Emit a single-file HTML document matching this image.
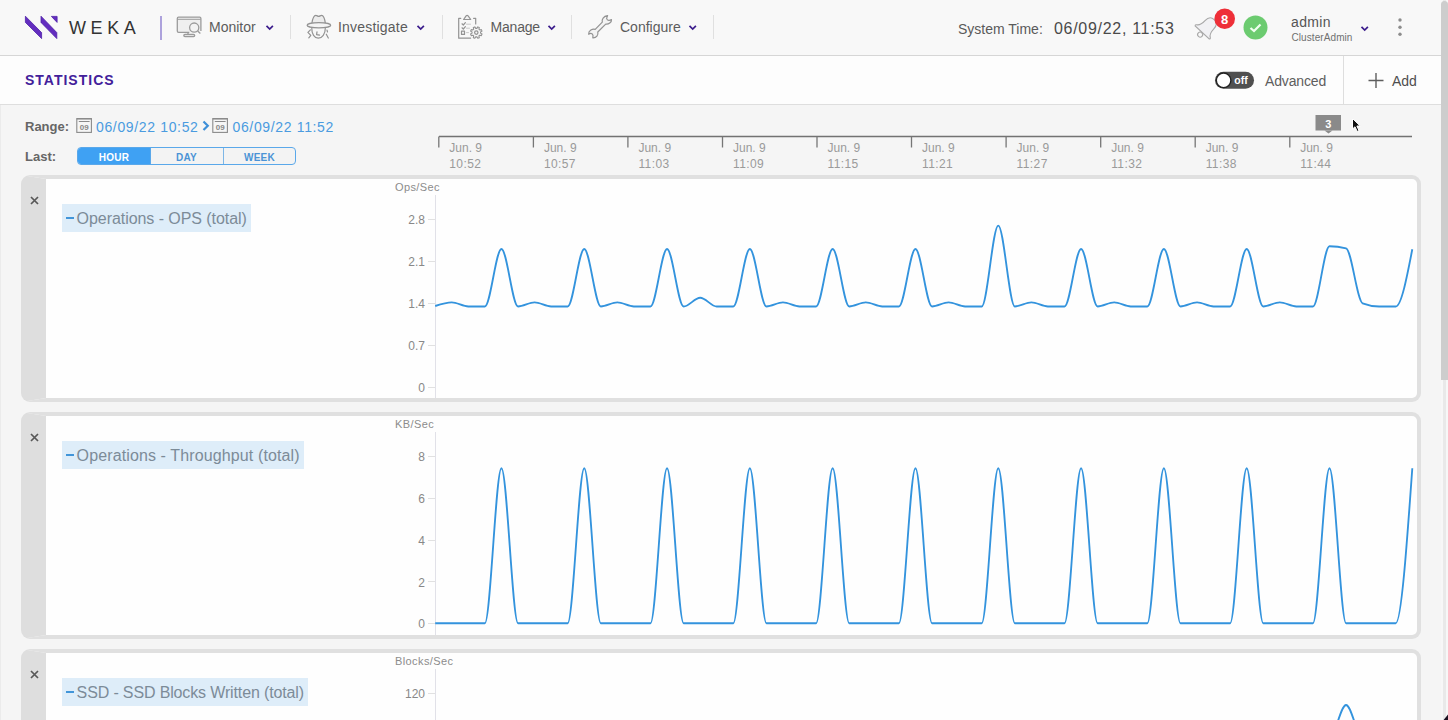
<!DOCTYPE html>
<html><head><meta charset="utf-8">
<style>
*{box-sizing:border-box;margin:0;padding:0}
html,body{width:1448px;height:720px;overflow:hidden}
body{position:relative;background:#f5f5f5;font-family:"Liberation Sans",sans-serif;color:#555}
.a{position:absolute;white-space:nowrap}
#hdr{position:absolute;left:0;top:0;width:1441px;height:56px;background:#f8f8f8;border-bottom:1px solid #d6d6d6}
#bar{position:absolute;left:0;top:56px;width:1441px;height:49px;background:#fdfdfd;border-bottom:1px solid #dedede}
.nav{font-size:14px;color:#5c5c5c}
.sep{position:absolute;width:1px;background:#e0e0e0}
.card{position:absolute;left:21px;width:1400px;border:4px solid #e0e0e0;border-left:25px solid #dedede;border-radius:9px;background:#fefefe}
.x{position:absolute;left:30px;width:9px;height:9px}
.leg{position:absolute;left:62px;height:28px;background:#deedf9}
.leg span.d{position:absolute;left:4.3px;top:13.3px;width:7.5px;height:2px;background:#4195d9}
.leg span.t{position:absolute;left:14.6px;top:6px;font-size:16px;color:#7c8b98;white-space:nowrap}
.yl{font-size:11px;color:#8c8c8c;letter-spacing:0.4px}
.tk{font-size:12px;color:#888;text-align:right;width:40px}
.tl{font-size:12px;color:#9a9a9a;line-height:16px}
#scr{position:absolute;left:1441px;top:0;width:7px;height:720px;background:#f7f7f7}
#rail{position:absolute;left:1443px;top:0;width:3px;height:720px;background:#e9e9e9}
#thumb{position:absolute;left:1441px;top:1px;width:7px;height:379px;background:#cdcdcd;border-radius:4px 4px 0 0}
</style></head><body>
<div id="hdr"></div>
<div id="bar"></div>

<!-- logo -->
<svg class="a" style="left:0;top:0" width="160" height="56">
 <g fill="#632dbf" stroke="#4f22a8" stroke-width="0.8" stroke-linejoin="round">
 <polygon points="25.4,16.2 41.6,32.6 41.6,38.6 25.4,22.4"/>
 <polygon points="41,16.2 56.8,32.6 56.8,38.6 41,22.4"/>
 <polygon points="51.4,16.4 57.1,16.4 57.1,22.4"/>
 </g>
</svg>
<div class="a" id="weka" style="left:69px;top:18px;font-size:18px;letter-spacing:4.6px;color:#333">WEKA</div>
<div class="a" style="left:160px;top:16px;width:2px;height:24px;background:#ada2dc"></div>

<!-- nav items -->
<svg class="a" style="left:0;top:0" width="210" height="45" fill="none" stroke="#9b9b9b" stroke-width="1.3">
 <path d="M189.3 32.4 H178.6 Q177.3 32.4 177.3 31.1 V18.4 Q177.3 17.1 178.6 17.1 H199.6 Q200.9 17.1 200.9 18.4 V31" fill="#efefef"/>
 <line x1="177.5" y1="19.3" x2="200.7" y2="19.3" stroke-width="1"/>
 <circle cx="194.2" cy="27.6" r="4.6" fill="#f3f3f3"/>
 <line x1="197.6" y1="31" x2="200.4" y2="33.6"/>
 <path d="M188 32.6 V34.3 M185 34.3 H193.5 Q194.7 34.3 194.7 35.4 Q194.7 36.5 193.5 36.5 H185 Q183.8 36.5 183.8 35.4 Q183.8 34.3 185 34.3 Z"/>
</svg>
<div class="a nav" id="n1" style="left:209px;top:19px">Monitor</div>
<svg class="a" style="left:265px;top:24px" width="10" height="7"><path d="M1.5 1.8 L4.7 5 L7.9 1.8" fill="none" stroke="#3b1c8c" stroke-width="1.7"/></svg>
<div class="sep" style="left:290px;top:15px;height:24px"></div>

<svg class="a" style="left:0;top:0" width="340" height="45" fill="none" stroke="#939393" stroke-width="1.2" stroke-linecap="round" stroke-linejoin="round">
 <path d="M311.8 23.5 C312.5 19 313.5 15.3 315.8 15.3 C317 15.3 317.6 16.4 318.7 16.4 C319.8 16.4 320.4 15.3 321.6 15.3 C323.9 15.3 324.8 19 325.4 23.5" fill="#ececec"/>
 <ellipse cx="318.9" cy="25.2" rx="11.8" ry="2.6" fill="#f4f4f4"/>
 <path d="M311.8 28.2 C311.6 34 314.5 38.2 318.3 38.2 C322.2 38.2 325.3 34 325.3 28.2"/>
 <path d="M310.4 29.9 L307.9 32.4 L310.8 35.3 L308.8 37.8"/>
 <path d="M327 30.2 L327.5 32 M326.3 34.2 L328.3 38"/>
 <path d="M317 31.8 L316.6 34.6 L319.6 35.2"/>
</svg>
<div class="a nav" id="n2" style="left:338px;top:19px;letter-spacing:0.2px">Investigate</div>
<svg class="a" style="left:416px;top:24px" width="10" height="7"><path d="M1.5 1.8 L4.7 5 L7.9 1.8" fill="none" stroke="#3b1c8c" stroke-width="1.7"/></svg>
<div class="sep" style="left:442px;top:15px;height:24px"></div>

<svg class="a" style="left:0;top:0" width="490" height="45" fill="none" stroke="#939393" stroke-width="1.2" stroke-linecap="round" stroke-linejoin="round">
 <path d="M460.8 18.3 H458.7 V38.2 H470.6 M473.6 18.3 H475.7 V24"/>
 <path d="M463.6 19.5 L466.1 15.8 Q467.1 14.8 468.1 15.8 L470.7 19.5 Z" fill="#f2f2f2"/>
 <path d="M462 23.8 L463.3 25 L465.4 22.6 M462 27.8 L463.3 29 L465.4 26.6"/>
 <path d="M466.5 24.2 H470.5 M466.5 28.2 H469.5 M466.5 32.6 H468.5" stroke="#c8c8c8" stroke-width="1"/>
 <rect x="461.5" y="31.2" width="3" height="3.2"/>
 <path d="M479.71 29.98 L481.38 29.61 L482.01 31.12 L480.56 32.04 L480.56 33.16 L482.01 34.08 L481.38 35.59 L479.71 35.22 L478.92 36.01 L479.29 37.68 L477.78 38.31 L476.86 36.86 L475.74 36.86 L474.82 38.31 L473.31 37.68 L473.68 36.01 L472.89 35.22 L471.22 35.59 L470.59 34.08 L472.04 33.16 L472.04 32.04 L470.59 31.12 L471.22 29.61 L472.89 29.98 L473.68 29.19 L473.31 27.52 L474.82 26.89 L475.74 28.34 L476.86 28.34 L477.78 26.89 L479.29 27.52 L478.92 29.19 Z" fill="#f6f6f6" stroke-width="1.1"/>
 <circle cx="476.3" cy="32.6" r="1.7"/>
</svg>
<div class="a nav" id="n3" style="left:490.5px;top:19px;letter-spacing:-0.2px">Manage</div>
<svg class="a" style="left:546.5px;top:24px" width="10" height="7"><path d="M1.5 1.8 L4.7 5 L7.9 1.8" fill="none" stroke="#3b1c8c" stroke-width="1.7"/></svg>
<div class="sep" style="left:571px;top:15px;height:24px"></div>

<svg class="a" style="left:0;top:0" width="620" height="45" fill="#f3f3f3" stroke="#939393" stroke-width="1.2" stroke-linejoin="round">
 <path d="M607.6 15.6 C603.5 16 601.5 19.5 602.3 22.2 L595.2 29.4 C592.5 28.6 588.5 30.5 588.6 34.2 L590.6 33.4 Q592.6 33.2 593.0 35.4 L592.8 37.8 C596.5 38 598.5 35 597.8 32.0 L605.7 24.1 C608.5 24.5 611.8 22.5 611.5 19.5 L609.5 20.3 Q607.2 20.8 606.6 18.4 Z"/>
</svg>
<div class="a nav" id="n4" style="left:620px;top:19px">Configure</div>
<svg class="a" style="left:688px;top:24px" width="10" height="7"><path d="M1.5 1.8 L4.7 5 L7.9 1.8" fill="none" stroke="#3b1c8c" stroke-width="1.7"/></svg>
<div class="sep" style="left:713px;top:15px;height:24px"></div>

<!-- right header -->
<div class="a" id="st" style="left:958px;top:21.3px;font-size:14px;color:#5a5a5a">System Time:</div>
<div class="a" id="sv" style="left:1054px;top:20px;font-size:16px;color:#4a4a4a;letter-spacing:0.7px">06/09/22, 11:53</div>
<svg class="a" style="left:0;top:0" width="1240" height="45">
 <g transform="translate(1202.6,32) rotate(43) translate(0,-8)" stroke="#a8a8a8" stroke-width="1.1" fill="#f1f1f4">
  <circle cx="0" cy="11.6" r="2.5" fill="none"/>
  <path d="M-9.6 8.6 Q-10.6 7.6 -9.4 6.8 C-7 5.5 -6 3 -6 -2 C-6 -7 -3 -9 0 -9 C3 -9 6 -7 6 -2 C6 3 7 5.5 9.4 6.8 Q10.6 7.6 9.6 8.6 Z"/>
 </g>
 <circle cx="1224.7" cy="18.7" r="10.3" fill="#ee2f38"/>
 <text x="1224.7" y="23.5" text-anchor="middle" font-size="13" font-weight="bold" fill="#fff" font-family="Liberation Sans">8</text>
</svg>
<svg class="a" style="left:1242px;top:14px" width="28" height="28">
 <circle cx="13.5" cy="13.6" r="12" fill="#6ccb70"/>
 <path d="M8.5 14 L12 17 L18.5 10.5" fill="none" stroke="#f0fff0" stroke-width="2.2"/>
</svg>
<div class="a" id="ad" style="left:1291px;top:14px;font-size:14px;color:#555;letter-spacing:0.35px">admin</div>
<div class="a" id="ca" style="left:1291.5px;top:32px;font-size:10px;color:#707070;letter-spacing:0.08px">ClusterAdmin</div>
<svg class="a" style="left:1359.5px;top:25px" width="10" height="7"><path d="M1.5 1.8 L4.7 5 L7.9 1.8" fill="none" stroke="#3b1c8c" stroke-width="1.7"/></svg>
<svg class="a" style="left:1396px;top:16px" width="8" height="22"><circle cx="4" cy="4" r="1.7" fill="#8c8c8c"/><circle cx="4" cy="11.2" r="1.7" fill="#8c8c8c"/><circle cx="4" cy="18.2" r="1.7" fill="#8c8c8c"/></svg>

<!-- statistics bar -->
<div class="a" id="stat" style="left:25px;top:72px;font-size:14px;font-weight:bold;color:#42209a;letter-spacing:1.0px">STATISTICS</div>
<svg class="a" style="left:1214px;top:71px" width="42" height="19">
 <rect x="1" y="0.8" width="39" height="17" rx="8.5" fill="#505050"/>
 <circle cx="9.6" cy="9.3" r="7.3" fill="#fff" stroke="#222" stroke-width="1.4"/>
 <text x="27" y="12.6" text-anchor="middle" font-size="10.5" font-weight="bold" fill="#fff" font-family="Liberation Sans">off</text>
</svg>
<div class="a" id="adv" style="left:1265px;top:73px;font-size:14px;color:#5e5e5e;letter-spacing:-0.15px">Advanced</div>
<div class="a" style="left:1343px;top:56px;width:1px;height:49px;background:#dedede"></div>
<svg class="a" style="left:1366px;top:71px" width="20" height="20"><path d="M10 2 V17 M2.5 9.5 H17.5" stroke="#5e5e5e" stroke-width="1.4"/></svg>
<div class="a" id="add" style="left:1392px;top:73px;font-size:14px;color:#4e4e4e">Add</div>

<!-- range -->
<div class="a" id="rng" style="left:25px;top:119px;font-size:13px;font-weight:bold;color:#666">Range:</div>
<svg class="a" style="left:76px;top:118px" width="17" height="16"><rect x="0.8" y="0.6" width="14.6" height="13.8" fill="#f6f6f6" stroke="#8a8a8a" stroke-width="1.1"/><line x1="0.8" y1="0.9" x2="15.4" y2="0.9" stroke="#8a8a8a" stroke-width="1.2"/><line x1="2.8" y1="3.5" x2="13.6" y2="3.5" stroke="#8a8a8a" stroke-width="1"/><text x="8.2" y="11.7" text-anchor="middle" font-size="8" font-weight="bold" fill="#888" font-family="Liberation Sans">09</text></svg>
<div class="a" id="d1" style="left:96px;top:119px;font-size:14px;color:#4a9be0;letter-spacing:0.65px">06/09/22 10:52</div>
<svg class="a" style="left:202px;top:120px" width="8" height="12"><path d="M1.5 1.5 L5.8 5.8 L1.5 10" fill="none" stroke="#3d8fd8" stroke-width="2.2"/></svg>
<svg class="a" style="left:212px;top:118px" width="17" height="16"><rect x="0.8" y="0.6" width="14.6" height="13.8" fill="#f6f6f6" stroke="#8a8a8a" stroke-width="1.1"/><line x1="0.8" y1="0.9" x2="15.4" y2="0.9" stroke="#8a8a8a" stroke-width="1.2"/><line x1="2.8" y1="3.5" x2="13.6" y2="3.5" stroke="#8a8a8a" stroke-width="1"/><text x="8.2" y="11.7" text-anchor="middle" font-size="8" font-weight="bold" fill="#888" font-family="Liberation Sans">09</text></svg>
<div class="a" id="d2" style="left:232.5px;top:119px;font-size:14px;color:#4a9be0;letter-spacing:0.65px">06/09/22 11:52</div>

<div class="a" id="lst" style="left:25px;top:149px;font-size:13px;font-weight:bold;color:#666">Last:</div>
<div class="a" style="left:77px;top:147px;width:219px;height:18px;border:1px solid #5aa8ea;border-radius:4px;background:#f3f3f3;overflow:hidden">
 <div class="a" style="left:0;top:0;width:72px;height:16px;background:#3fa1f3"></div>
 <div class="a" style="left:144.5px;top:0;width:1px;height:16px;background:#7db6e6"></div>
 <div class="a" style="left:72px;top:0;width:1px;height:16px;background:#5aa8ea"></div>
 <div class="a" id="bh" style="left:0;width:72px;text-align:center;top:2.5px;line-height:13px;font-size:10px;font-weight:bold;letter-spacing:0.3px;color:#fff">HOUR</div>
 <div class="a" id="bd" style="left:72px;width:73px;text-align:center;top:2.5px;line-height:13px;font-size:10px;font-weight:bold;letter-spacing:0.3px;color:#4b93d6">DAY</div>
 <div class="a" id="bw" style="left:145px;width:73px;text-align:center;top:2.5px;line-height:13px;font-size:10px;font-weight:bold;letter-spacing:0.3px;color:#4b93d6">WEEK</div>
</div>

<!-- time axis -->
<svg class="a" style="left:430px;top:110px" width="1000" height="40">
 <path d="M9 26.5 H982" stroke="#727272" stroke-width="1.3"/>
 <g stroke="#767676" stroke-width="1.3">
 <path d="M8.8 26.5 V37.5"/><path d="M103.4 26.5 V37.5"/><path d="M197.9 26.5 V37.5"/><path d="M292.5 26.5 V37.5"/><path d="M387.0 26.5 V37.5"/><path d="M481.5 26.5 V37.5"/><path d="M576.1 26.5 V37.5"/><path d="M670.7 26.5 V37.5"/><path d="M765.2 26.5 V37.5"/><path d="M859.8 26.5 V37.5"/>
 </g>
 <rect x="885.5" y="5" width="25.5" height="15.5" fill="#8a8a8a"/>
 <path d="M894.5 20.5 L898.5 23.5 L902.5 20.5 Z" fill="#8a8a8a"/>
 <text x="898.3" y="17.8" text-anchor="middle" font-size="11" font-weight="bold" fill="#fff" font-family="Liberation Sans">3</text>
</svg>
<div class="a tl" style="left:449.3px;top:140px">Jun. 9<br><span style="letter-spacing:0.4px">10:52</span></div><div class="a tl" style="left:543.9px;top:140px">Jun. 9<br><span style="letter-spacing:0.4px">10:57</span></div><div class="a tl" style="left:638.4px;top:140px">Jun. 9<br><span style="letter-spacing:0.4px">11:03</span></div><div class="a tl" style="left:733.0px;top:140px">Jun. 9<br><span style="letter-spacing:0.4px">11:09</span></div><div class="a tl" style="left:827.5px;top:140px">Jun. 9<br><span style="letter-spacing:0.4px">11:15</span></div><div class="a tl" style="left:922.0px;top:140px">Jun. 9<br><span style="letter-spacing:0.4px">11:21</span></div><div class="a tl" style="left:1016.6px;top:140px">Jun. 9<br><span style="letter-spacing:0.4px">11:27</span></div><div class="a tl" style="left:1111.2px;top:140px">Jun. 9<br><span style="letter-spacing:0.4px">11:32</span></div><div class="a tl" style="left:1205.7px;top:140px">Jun. 9<br><span style="letter-spacing:0.4px">11:38</span></div><div class="a tl" style="left:1300.2px;top:140px">Jun. 9<br><span style="letter-spacing:0.4px">11:44</span></div>
<!-- cursor -->
<svg class="a" style="left:1350px;top:116px" width="14" height="20"><path d="M2.5 2.5 L2.5 13 L5 10.8 L7.2 15.5 L9 14.6 L6.9 10 L10.2 10 Z" fill="#111" stroke="#fff" stroke-width="1"/></svg>

<!-- cards -->
<div class="card" style="top:175px;height:227px"></div>
<div class="card" style="top:412px;height:227px"></div>
<div class="card" style="top:649px;height:227px"></div>
<svg class="x" style="top:196.0px" viewBox="0 0 9 9"><path d="M1 1 L8 8 M8 1 L1 8" stroke="#585858" stroke-width="1.7"/></svg><div class="leg" style="top:203.5px;height:28.5px;width:189.0px"><span class="d"></span><span class="t" style="letter-spacing:-0.06px">Operations - OPS (total)</span></div><div class="a yl" style="left:395px;top:181.0px">Ops/Sec</div><div class="a" style="left:435px;top:195.0px;width:1px;height:203.0px;background:#e1e1e8"></div><div class="a tk" style="left:385px;top:213.0px">2.8</div><div class="a" style="left:428px;top:218.5px;width:7px;height:1px;background:#e1e1e1"></div><div class="a tk" style="left:385px;top:255.0px">2.1</div><div class="a" style="left:428px;top:260.5px;width:7px;height:1px;background:#e1e1e1"></div><div class="a tk" style="left:385px;top:297.0px">1.4</div><div class="a" style="left:428px;top:302.5px;width:7px;height:1px;background:#e1e1e1"></div><div class="a tk" style="left:385px;top:339.0px">0.7</div><div class="a" style="left:428px;top:344.5px;width:7px;height:1px;background:#e1e1e1"></div><div class="a tk" style="left:385px;top:381.0px">0</div><div class="a" style="left:428px;top:386.5px;width:7px;height:1px;background:#e1e1e1"></div><svg class="x" style="top:433.0px" viewBox="0 0 9 9"><path d="M1 1 L8 8 M8 1 L1 8" stroke="#585858" stroke-width="1.7"/></svg><div class="leg" style="top:440.5px;height:28.5px;width:242.3px"><span class="d"></span><span class="t" style="letter-spacing:0.12px">Operations - Throughput (total)</span></div><div class="a yl" style="left:395px;top:418.0px">KB/Sec</div><div class="a" style="left:435px;top:432.0px;width:1px;height:203.0px;background:#e1e1e8"></div><div class="a tk" style="left:385px;top:450.0px">8</div><div class="a" style="left:428px;top:455.5px;width:7px;height:1px;background:#e1e1e1"></div><div class="a tk" style="left:385px;top:492.0px">6</div><div class="a" style="left:428px;top:497.5px;width:7px;height:1px;background:#e1e1e1"></div><div class="a tk" style="left:385px;top:534.0px">4</div><div class="a" style="left:428px;top:539.5px;width:7px;height:1px;background:#e1e1e1"></div><div class="a tk" style="left:385px;top:575.5px">2</div><div class="a" style="left:428px;top:581.0px;width:7px;height:1px;background:#e1e1e1"></div><div class="a tk" style="left:385px;top:617.2px">0</div><div class="a" style="left:428px;top:622.7px;width:7px;height:1px;background:#e1e1e1"></div><svg class="x" style="top:670.0px" viewBox="0 0 9 9"><path d="M1 1 L8 8 M8 1 L1 8" stroke="#585858" stroke-width="1.7"/></svg><div class="leg" style="top:677.5px;height:28.5px;width:245.6px"><span class="d"></span><span class="t" style="letter-spacing:-0.14px">SSD - SSD Blocks Written (total)</span></div><div class="a yl" style="left:395px;top:655.0px">Blocks/Sec</div><div class="a" style="left:435px;top:669.0px;width:1px;height:100.0px;background:#e1e1e8"></div><div class="a tk" style="left:385px;top:687.2px">120</div><div class="a" style="left:428px;top:692.7px;width:7px;height:1px;background:#e1e1e1"></div>

<svg class="a" style="left:0;top:0" width="1448" height="720">
 <g fill="none" stroke="#3393dd" stroke-width="1.85" stroke-linejoin="round">
 <path d="M435.20,306.00C440.72,304.20,446.24,302.40,451.76,302.40C457.28,302.40,462.80,306.50,468.32,306.50C473.84,306.50,479.36,306.50,484.88,306.50C490.40,306.50,495.92,249.00,501.44,249.00C506.96,249.00,512.48,306.50,518.01,306.50C523.53,306.50,529.05,302.40,534.57,302.40C540.09,302.40,545.61,306.50,551.13,306.50C556.65,306.50,562.17,306.50,567.69,306.50C573.21,306.50,578.73,249.00,584.25,249.00C589.77,249.00,595.29,306.50,600.81,306.50C606.33,306.50,611.85,302.40,617.37,302.40C622.89,302.40,628.41,306.50,633.93,306.50C639.45,306.50,644.97,306.50,650.49,306.50C656.01,306.50,661.53,249.00,667.05,249.00C672.57,249.00,678.09,306.50,683.62,306.50C689.14,306.50,694.66,297.70,700.18,297.70C705.70,297.70,711.22,306.50,716.74,306.50C722.26,306.50,727.78,306.50,733.30,306.50C738.82,306.50,744.34,249.00,749.86,249.00C755.38,249.00,760.90,306.50,766.42,306.50C771.94,306.50,777.46,302.40,782.98,302.40C788.50,302.40,794.02,306.50,799.54,306.50C805.06,306.50,810.58,306.50,816.10,306.50C821.62,306.50,827.14,249.00,832.66,249.00C838.18,249.00,843.71,306.50,849.23,306.50C854.75,306.50,860.27,302.40,865.79,302.40C871.31,302.40,876.83,306.50,882.35,306.50C887.87,306.50,893.39,306.50,898.91,306.50C904.43,306.50,909.95,249.00,915.47,249.00C920.99,249.00,926.51,306.50,932.03,306.50C937.55,306.50,943.07,302.40,948.59,302.40C954.11,302.40,959.63,306.50,965.15,306.50C970.67,306.50,976.19,306.50,981.71,306.50C987.23,306.50,992.75,225.60,998.27,225.60C1003.79,225.60,1009.32,306.50,1014.84,306.50C1020.36,306.50,1025.88,302.40,1031.40,302.40C1036.92,302.40,1042.44,306.50,1047.96,306.50C1053.48,306.50,1059.00,306.50,1064.52,306.50C1070.04,306.50,1075.56,249.00,1081.08,249.00C1086.60,249.00,1092.12,306.50,1097.64,306.50C1103.16,306.50,1108.68,302.40,1114.20,302.40C1119.72,302.40,1125.24,306.50,1130.76,306.50C1136.28,306.50,1141.80,306.50,1147.32,306.50C1152.84,306.50,1158.36,249.00,1163.88,249.00C1169.41,249.00,1174.93,306.50,1180.45,306.50C1185.97,306.50,1191.49,302.40,1197.01,302.40C1202.53,302.40,1208.05,306.50,1213.57,306.50C1219.09,306.50,1224.61,306.50,1230.13,306.50C1235.65,306.50,1241.17,249.00,1246.69,249.00C1252.21,249.00,1257.73,306.50,1263.25,306.50C1268.77,306.50,1274.29,302.40,1279.81,302.40C1285.33,302.40,1290.85,306.50,1296.37,306.50C1301.89,306.50,1307.41,306.50,1312.93,306.50C1318.45,306.50,1323.97,246.20,1329.49,246.20C1335.02,246.20,1340.54,246.90,1346.06,248.30C1351.58,249.70,1357.10,301.17,1362.62,303.30C1368.14,305.43,1373.66,306.50,1379.18,306.50C1384.70,306.50,1390.22,306.50,1395.74,306.50C1401.26,306.50,1406.78,277.90,1412.30,249.30"/>
 <path d="M435.20,623.20C440.72,623.20,446.24,623.20,451.76,623.20C457.28,623.20,462.80,623.20,468.32,623.20C473.84,623.20,479.36,623.20,484.88,623.20C490.40,623.20,495.92,468.20,501.44,468.20C506.96,468.20,512.48,623.20,518.01,623.20C523.53,623.20,529.05,623.20,534.57,623.20C540.09,623.20,545.61,623.20,551.13,623.20C556.65,623.20,562.17,623.20,567.69,623.20C573.21,623.20,578.73,468.20,584.25,468.20C589.77,468.20,595.29,623.20,600.81,623.20C606.33,623.20,611.85,623.20,617.37,623.20C622.89,623.20,628.41,623.20,633.93,623.20C639.45,623.20,644.97,623.20,650.49,623.20C656.01,623.20,661.53,468.20,667.05,468.20C672.57,468.20,678.09,623.20,683.62,623.20C689.14,623.20,694.66,623.20,700.18,623.20C705.70,623.20,711.22,623.20,716.74,623.20C722.26,623.20,727.78,623.20,733.30,623.20C738.82,623.20,744.34,468.20,749.86,468.20C755.38,468.20,760.90,623.20,766.42,623.20C771.94,623.20,777.46,623.20,782.98,623.20C788.50,623.20,794.02,623.20,799.54,623.20C805.06,623.20,810.58,623.20,816.10,623.20C821.62,623.20,827.14,468.20,832.66,468.20C838.18,468.20,843.71,623.20,849.23,623.20C854.75,623.20,860.27,623.20,865.79,623.20C871.31,623.20,876.83,623.20,882.35,623.20C887.87,623.20,893.39,623.20,898.91,623.20C904.43,623.20,909.95,468.20,915.47,468.20C920.99,468.20,926.51,623.20,932.03,623.20C937.55,623.20,943.07,623.20,948.59,623.20C954.11,623.20,959.63,623.20,965.15,623.20C970.67,623.20,976.19,623.20,981.71,623.20C987.23,623.20,992.75,468.20,998.27,468.20C1003.79,468.20,1009.32,623.20,1014.84,623.20C1020.36,623.20,1025.88,623.20,1031.40,623.20C1036.92,623.20,1042.44,623.20,1047.96,623.20C1053.48,623.20,1059.00,623.20,1064.52,623.20C1070.04,623.20,1075.56,468.20,1081.08,468.20C1086.60,468.20,1092.12,623.20,1097.64,623.20C1103.16,623.20,1108.68,623.20,1114.20,623.20C1119.72,623.20,1125.24,623.20,1130.76,623.20C1136.28,623.20,1141.80,623.20,1147.32,623.20C1152.84,623.20,1158.36,468.20,1163.88,468.20C1169.41,468.20,1174.93,623.20,1180.45,623.20C1185.97,623.20,1191.49,623.20,1197.01,623.20C1202.53,623.20,1208.05,623.20,1213.57,623.20C1219.09,623.20,1224.61,623.20,1230.13,623.20C1235.65,623.20,1241.17,468.20,1246.69,468.20C1252.21,468.20,1257.73,623.20,1263.25,623.20C1268.77,623.20,1274.29,623.20,1279.81,623.20C1285.33,623.20,1290.85,623.20,1296.37,623.20C1301.89,623.20,1307.41,623.20,1312.93,623.20C1318.45,623.20,1323.97,468.20,1329.49,468.20C1335.02,468.20,1340.54,623.20,1346.06,623.20C1351.58,623.20,1357.10,623.20,1362.62,623.20C1368.14,623.20,1373.66,623.20,1379.18,623.20C1384.70,623.20,1390.22,623.20,1395.74,623.20C1401.26,623.20,1406.78,545.70,1412.30,468.20"/>
 <clipPath id="cp3"><rect x="0" y="653" width="1420" height="67"/></clipPath>
 <path d="M435.20,738.00C440.72,738.00,446.24,738.00,451.76,738.00C457.28,738.00,462.80,738.00,468.32,738.00C473.84,738.00,479.36,738.00,484.88,738.00C490.40,738.00,495.92,738.00,501.44,738.00C506.96,738.00,512.48,738.00,518.01,738.00C523.53,738.00,529.05,738.00,534.57,738.00C540.09,738.00,545.61,738.00,551.13,738.00C556.65,738.00,562.17,738.00,567.69,738.00C573.21,738.00,578.73,738.00,584.25,738.00C589.77,738.00,595.29,738.00,600.81,738.00C606.33,738.00,611.85,738.00,617.37,738.00C622.89,738.00,628.41,738.00,633.93,738.00C639.45,738.00,644.97,738.00,650.49,738.00C656.01,738.00,661.53,738.00,667.05,738.00C672.57,738.00,678.09,738.00,683.62,738.00C689.14,738.00,694.66,738.00,700.18,738.00C705.70,738.00,711.22,738.00,716.74,738.00C722.26,738.00,727.78,738.00,733.30,738.00C738.82,738.00,744.34,738.00,749.86,738.00C755.38,738.00,760.90,738.00,766.42,738.00C771.94,738.00,777.46,738.00,782.98,738.00C788.50,738.00,794.02,738.00,799.54,738.00C805.06,738.00,810.58,738.00,816.10,738.00C821.62,738.00,827.14,738.00,832.66,738.00C838.18,738.00,843.71,738.00,849.23,738.00C854.75,738.00,860.27,738.00,865.79,738.00C871.31,738.00,876.83,738.00,882.35,738.00C887.87,738.00,893.39,738.00,898.91,738.00C904.43,738.00,909.95,738.00,915.47,738.00C920.99,738.00,926.51,738.00,932.03,738.00C937.55,738.00,943.07,738.00,948.59,738.00C954.11,738.00,959.63,738.00,965.15,738.00C970.67,738.00,976.19,738.00,981.71,738.00C987.23,738.00,992.75,738.00,998.27,738.00C1003.79,738.00,1009.32,738.00,1014.84,738.00C1020.36,738.00,1025.88,738.00,1031.40,738.00C1036.92,738.00,1042.44,738.00,1047.96,738.00C1053.48,738.00,1059.00,738.00,1064.52,738.00C1070.04,738.00,1075.56,738.00,1081.08,738.00C1086.60,738.00,1092.12,738.00,1097.64,738.00C1103.16,738.00,1108.68,738.00,1114.20,738.00C1119.72,738.00,1125.24,738.00,1130.76,738.00C1136.28,738.00,1141.80,738.00,1147.32,738.00C1152.84,738.00,1158.36,738.00,1163.88,738.00C1169.41,738.00,1174.93,738.00,1180.45,738.00C1185.97,738.00,1191.49,738.00,1197.01,738.00C1202.53,738.00,1208.05,738.00,1213.57,738.00C1219.09,738.00,1224.61,738.00,1230.13,738.00C1235.65,738.00,1241.17,738.00,1246.69,738.00C1252.21,738.00,1257.73,738.00,1263.25,738.00C1268.77,738.00,1274.29,738.00,1279.81,738.00C1285.33,738.00,1290.85,738.00,1296.37,738.00C1301.89,738.00,1307.41,738.00,1312.93,738.00C1318.45,738.00,1323.97,738.00,1329.49,738.00C1335.02,738.00,1340.54,705.00,1346.06,705.00C1351.58,705.00,1357.10,738.00,1362.62,738.00C1368.14,738.00,1373.66,738.00,1379.18,738.00C1384.70,738.00,1390.22,738.00,1395.74,738.00C1401.26,738.00,1406.78,738.00,1412.30,738.00" clip-path="url(#cp3)"/>
 </g>
</svg>

<div id="scr"></div><div id="rail"></div><div class="a" style="left:0;top:105px;width:1px;height:615px;background:#ebebeb"></div>
<div id="thumb"></div>
<svg class="a" style="left:1440px;top:708px" width="8" height="12"><path d="M8 6.5 L8 12 L3.6 12 Z" fill="#1a1020"/></svg>
</body></html>
